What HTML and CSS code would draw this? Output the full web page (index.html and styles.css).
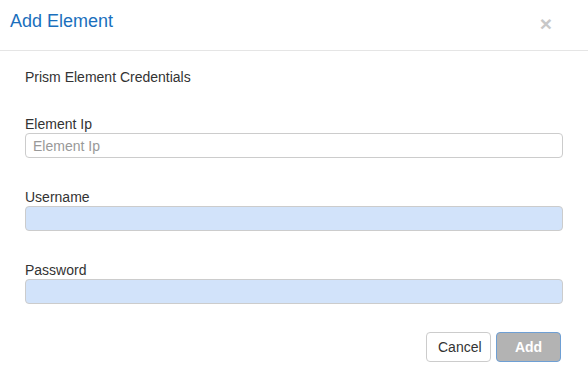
FILE: index.html
```html
<!DOCTYPE html>
<html lang="en">
<head>
    <meta charset="UTF-8">
    <title>Add Element</title>
    <link rel="stylesheet" href="styles.css">
</head>
<body>
    <div class="modal">
        <div class="modal-header">
            <h4 class="modal-title">Add Element</h4>
            <button class="close">&times;</button>
        </div>
        <div class="modal-body">
            <p class="section-title">Prism Element Credentials</p>
            <div class="form-group">
                <label>Element Ip</label>
                <input type="text" class="form-control" placeholder="Element Ip">
            </div>
            <div class="form-group">
                <label>Username</label>
                <input type="text" class="form-control autofill">
            </div>
            <div class="form-group">
                <label>Password</label>
                <input type="password" class="form-control autofill">
            </div>
        </div>
        <div class="modal-footer">
            <button class="btn btn-default">Cancel</button>
            <button class="btn btn-primary" disabled>Add</button>
        </div>
    </div>
</body>
</html>
```

FILE: styles.css
```css
body {
    margin: 0;
    font-family: "Liberation Sans", Arial, sans-serif;
    font-size: 14px;
    color: #333;
    background: #fff;
}

.modal {
    width: 588px;
}

.modal-header {
    display: flex;
    align-items: center;
    justify-content: space-between;
    height: 50px;
    padding: 0 36px 0 10px;
    border-bottom: 1px solid #e5e5e5;
}

.modal-title {
    margin: 0 0 8px;
    font-size: 18px;
    font-weight: normal;
    color: #1a6fbd;
}

.close {
    background: none;
    border: none;
    padding: 0;
    margin-bottom: 4px;
    font-family: "Liberation Sans", Arial, sans-serif;
    font-size: 21px;
    font-weight: bold;
    line-height: 1;
    color: #c8c8c8;
    cursor: pointer;
}

.modal-body {
    padding: 16px 25px 0;
}

.section-title {
    margin: 0 0 29px;
    line-height: 20px;
}

.form-group {
    margin-bottom: 31px;
}

.form-group label {
    display: block;
    line-height: 16px;
    margin-bottom: 1px;
}

.form-control {
    display: block;
    box-sizing: border-box;
    width: 538px;
    height: 25px;
    padding: 2px 7px;
    border: 1px solid #ccc;
    border-radius: 4px;
    font-family: "Liberation Sans", Arial, sans-serif;
    font-size: 14px;
    color: #555;
    background: #fff;
}

.form-control::placeholder {
    color: #999;
}

.autofill {
    background: #d2e3fa;
}

.modal-footer {
    display: flex;
    justify-content: flex-end;
    gap: 5px;
    padding: 0 27px 0 0;
    margin-top: -3px;
}

.btn {
    height: 30px;
    padding: 0 11px;
    border-radius: 4px;
    font-family: "Liberation Sans", Arial, sans-serif;
    font-size: 14px;
    cursor: pointer;
}

.btn-default {
    width: 65px;
    background: #fff;
    border: 1px solid #ccc;
    color: #333;
}

.btn-primary {
    width: 65px;
    background: #b3b3b3;
    border: 1px solid #6e9fd4;
    color: #fff;
    font-weight: bold;
}
```
